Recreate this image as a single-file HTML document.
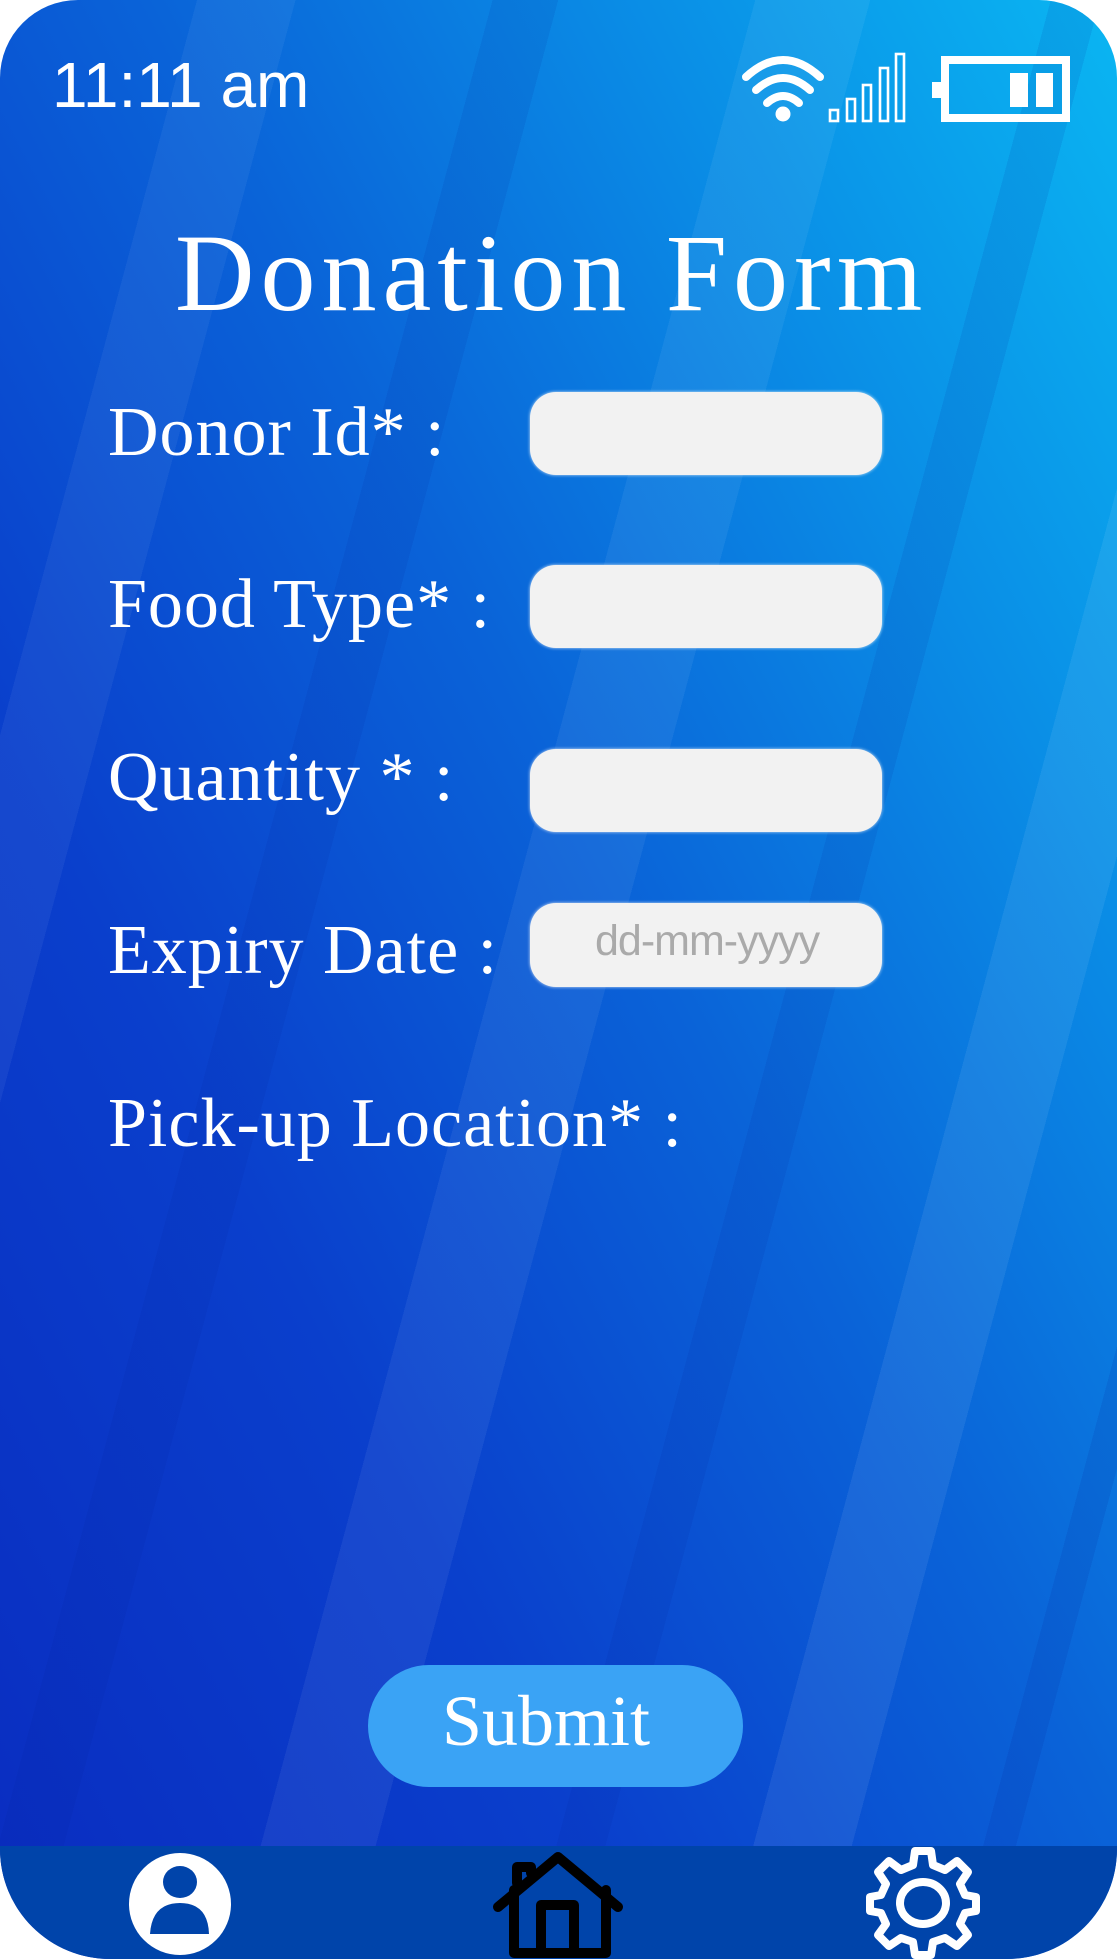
<!DOCTYPE html>
<html><head><meta charset="utf-8">
<style>
html,body{margin:0;padding:0;width:1117px;height:1959px;background:#fff;overflow:hidden}
#ph{position:absolute;left:0;top:0;width:1117px;height:1959px;border-radius:78px 78px 110px 110px;overflow:hidden;
background:linear-gradient(62deg,#0a2cc0 0%,#0a3fcc 30%,#0a63d8 55%,#0a8ee6 78%,#0ab6f2 100%);}
#str{position:absolute;inset:0;background:
linear-gradient(105deg,transparent 0 12%,rgba(255,255,255,.05) 12% 18%,transparent 18% 30%,rgba(0,30,150,.10) 30% 34%,transparent 34% 46%,rgba(255,255,255,.06) 46% 53%,transparent 53% 64%,rgba(0,30,150,.10) 64% 67%,transparent 67% 76%,rgba(255,255,255,.07) 76% 82%,transparent 82% 90%,rgba(0,30,150,.12) 90% 92%,transparent 92%);}
.t{position:absolute;color:#fff;font-family:"Liberation Serif",serif;white-space:nowrap;line-height:1}
.lab{font-size:70px;letter-spacing:1px}
.in{position:absolute;left:530px;width:352px;background:#f2f2f2;border-radius:26px;box-shadow:0 0 3px rgba(255,255,255,.8)}
#nav{position:absolute;left:0;top:1846px;width:1117px;height:113px;background:#0044aa}
</style></head><body>
<div id="ph">
<div id="str"></div>
<div class="t" style="left:52px;top:53px;font-family:'Liberation Sans',sans-serif;font-size:64px">11:11 am</div>
<svg style="position:absolute;left:0;top:0" width="1117" height="140">
<g fill="none" stroke="#fff" stroke-width="8" stroke-linecap="round">
<path d="M746 77 Q783 43 820 77"/>
<path d="M756 90 Q783 66 810 90"/>
<path d="M767 103 Q783 89 799 103"/>
</g>
<circle cx="783" cy="114" r="7.5" fill="#fff"/>
<g fill="none" stroke="#fff" stroke-width="2.6">
<rect x="830" y="110" width="8" height="11"/>
<rect x="847" y="99" width="8" height="22"/>
<rect x="863" y="85" width="8" height="36"/>
<rect x="880" y="68" width="8" height="53"/>
<rect x="896" y="54" width="8" height="67"/>
</g>
<rect x="945" y="60" width="121" height="58" fill="none" stroke="#fff" stroke-width="8"/>
<rect x="932" y="82" width="10" height="16" fill="#fff"/>
<rect x="1010" y="73" width="18" height="34" fill="#fff"/>
<rect x="1036" y="73" width="17" height="34" fill="#fff"/>
</svg>
<div class="t" style="left:175px;top:218px;font-size:110px;letter-spacing:6px">Donation Form</div>
<div class="t lab" style="left:108px;top:398px">Donor Id* :</div>
<div class="in" style="top:392px;height:83px"></div>
<div class="t lab" style="left:108px;top:570px">Food Type* :</div>
<div class="in" style="top:565px;height:83px"></div>
<div class="t lab" style="left:108px;top:743px">Quantity * :</div>
<div class="in" style="top:749px;height:83px"></div>
<div class="t lab" style="left:108px;top:916px">Expiry Date :</div>
<div class="in" style="top:903px;height:84px"></div>
<div class="t" style="left:595px;top:920px;font-family:'Liberation Sans',sans-serif;font-size:43px;color:#aaa;letter-spacing:-1px">dd-mm-yyyy</div>
<div class="t lab" style="left:108px;top:1089px">Pick-up Location* :</div>
<div style="position:absolute;left:368px;top:1665px;width:375px;height:122px;border-radius:61px;background:#3aa3f5"></div>
<div class="t" style="left:442px;top:1685px;font-size:72px">Submit</div>
<div id="nav"></div>
<svg style="position:absolute;left:0;top:1840px" width="1117" height="119">
<circle cx="180" cy="64" r="51" fill="#fff"/>
<ellipse cx="180" cy="42" rx="17" ry="16" fill="#0044aa"/>
<path d="M150 94 Q152 63 180 63 Q208 63 209 94 Z" fill="#0044aa"/>
<g fill="none" stroke="#000" stroke-width="10" stroke-linejoin="round" stroke-linecap="round">
<path d="M498 67 L558 17 L618 67"/>
<path d="M514 50 V113 H606 V50"/>
<path d="M541 113 V65 H574 V113"/>
<path d="M517 43 V27 H531 V33"/>
</g>
<g transform="translate(923,63)">
<path fill="none" stroke="#fff" stroke-width="8" stroke-linejoin="round" d="M-8,-52 L8,-52 L10,-38 L22,-33 L34,-42 L45,-31 L37,-19 L42,-8 L53,-6 L53,8 L42,10 L37,21 L45,32 L34,43 L22,35 L10,39 L8,52 L-8,52 L-10,39 L-22,35 L-34,43 L-45,32 L-37,21 L-42,10 L-53,8 L-53,-6 L-42,-8 L-37,-19 L-45,-31 L-34,-42 L-22,-33 L-10,-38 Z"/>
<ellipse cx="0" cy="0" rx="23" ry="21" fill="none" stroke="#fff" stroke-width="8"/>
</g>
</svg>
</div>
</body></html>
